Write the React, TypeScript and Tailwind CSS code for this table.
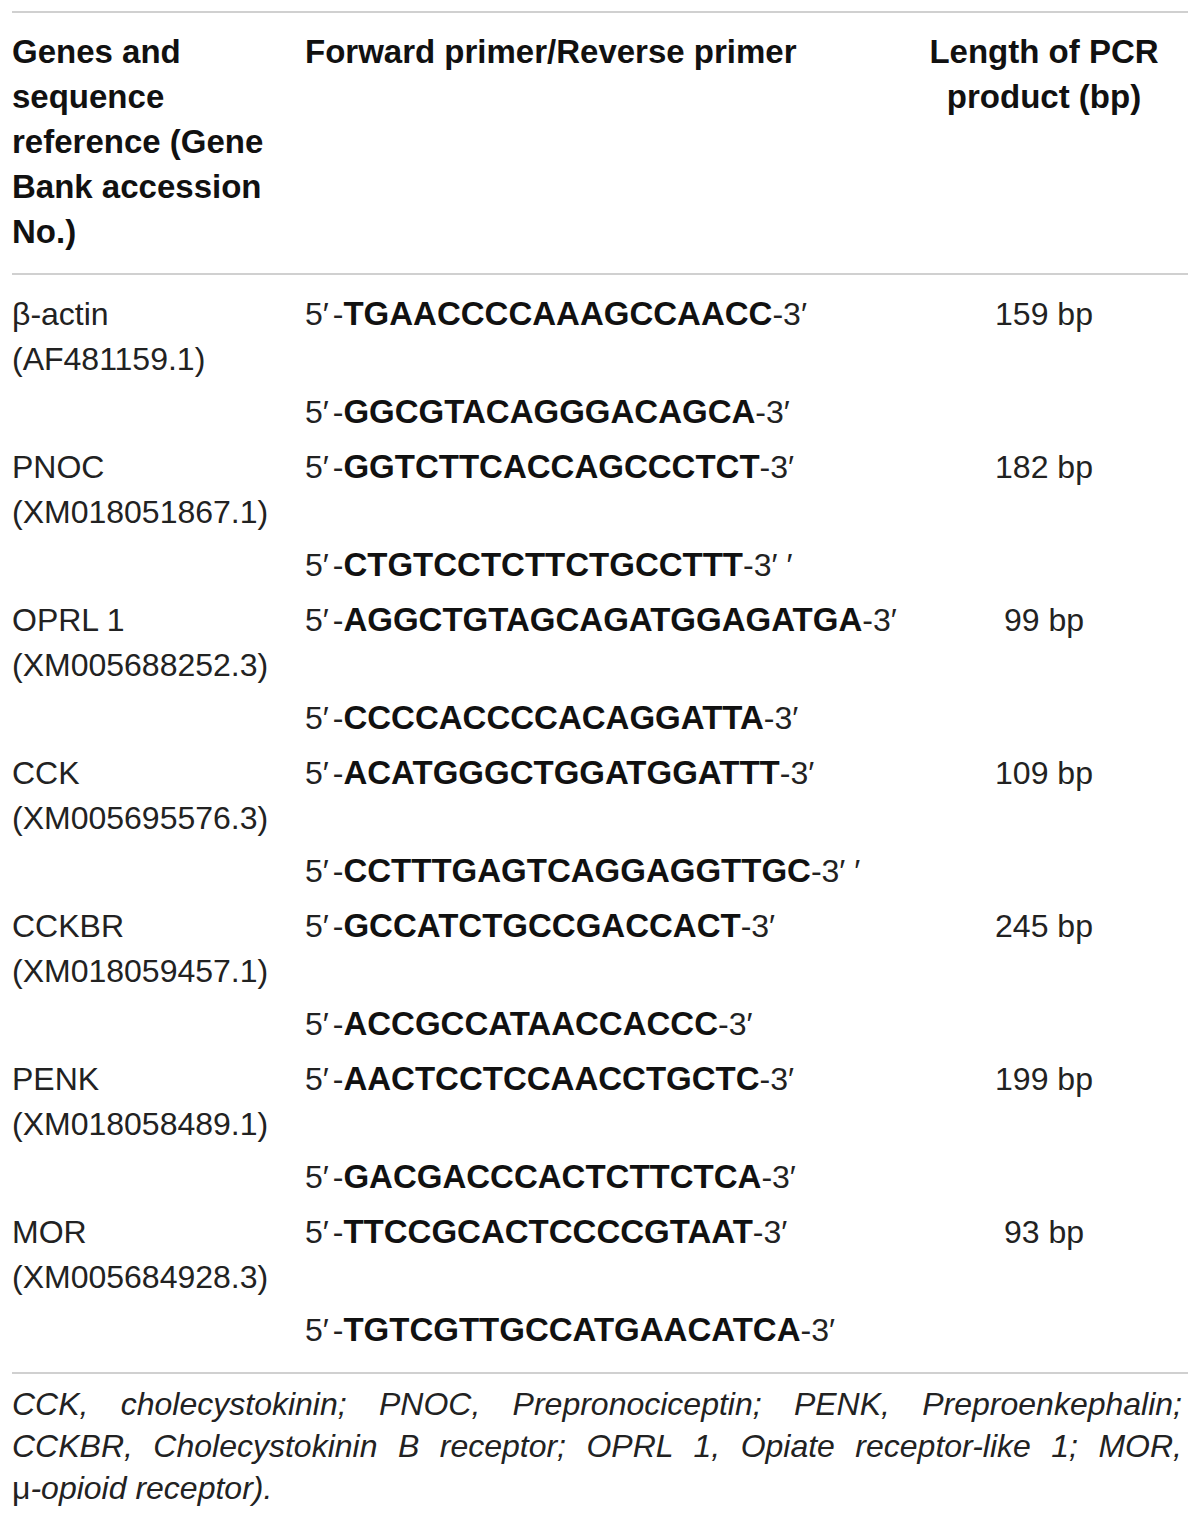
import React from "react";

const rows = [
  { name: "β-actin", acc: "(AF481159.1)", fwd: "TGAACCCCAAAGCCAACC", rev: "GGCGTACAGGGACAGCA", revExtra: "", len: "159 bp" },
  { name: "PNOC", acc: "(XM018051867.1)", fwd: "GGTCTTCACCAGCCCTCT", rev: "CTGTCCTCTTCTGCCTTT", revExtra: " ′", len: "182 bp" },
  { name: "OPRL 1", acc: "(XM005688252.3)", fwd: "AGGCTGTAGCAGATGGAGATGA", rev: "CCCCACCCCACAGGATTA", revExtra: "", len: "99 bp" },
  { name: "CCK", acc: "(XM005695576.3)", fwd: "ACATGGGCTGGATGGATTT", rev: "CCTTTGAGTCAGGAGGTTGC", revExtra: " ′", len: "109 bp" },
  { name: "CCKBR", acc: "(XM018059457.1)", fwd: "GCCATCTGCCGACCACT", rev: "ACCGCCATAACCACCC", revExtra: "", len: "245 bp" },
  { name: "PENK", acc: "(XM018058489.1)", fwd: "AACTCCTCCAACCTGCTC", rev: "GACGACCCACTCTTCTCA", revExtra: "", len: "199 bp" },
  { name: "MOR", acc: "(XM005684928.3)", fwd: "TTCCGCACTCCCCGTAAT", rev: "TGTCGTTGCCATGAACATCA", revExtra: "", len: "93 bp" },
];

function Primer({ seq, extra }: { seq: string; extra?: string }) {
  return (
    <span className="whitespace-nowrap">
      5′<span className="ml-[4px]">-</span>
      <span className="font-bold text-[33px] leading-none text-[#111]">{seq}</span>-3′{extra}
    </span>
  );
}

export default function App() {
  return (
    <div className="w-[1200px] h-[1521px] bg-white font-['Liberation_Sans',Arial,sans-serif] text-[32px] leading-[45px] text-[#222]">
      <div className="px-[12px]">
        <div className="mt-[11px] h-[2px] bg-[#d0d0d0]" />
        <div className="grid grid-cols-[293px_595px_288px] pt-[16px] pb-[19px] font-bold text-[33px] text-[#111]">
          <div className="pr-[20px]">Genes and sequence reference (Gene Bank accession No.)</div>
          <div>Forward primer/Reverse primer</div>
          <div className="text-center">Length of PCR product (bp)</div>
        </div>
        <div className="h-[2px] bg-[#d0d0d0]" />
        <div className="pt-[13px]">
          {rows.map((r) => (
            <div key={r.name}>
              <div className="grid grid-cols-[293px_595px_288px] pt-[4px] pb-[4px]">
                <div>
                  <div>{r.name}</div>
                  <div>{r.acc}</div>
                </div>
                <div>
                  <Primer seq={r.fwd} />
                </div>
                <div className="text-center">{r.len}</div>
              </div>
              <div className="grid grid-cols-[293px_595px_288px] pt-[4px] pb-[6px]">
                <div />
                <div>
                  <Primer seq={r.rev} extra={r.revExtra} />
                </div>
                <div />
              </div>
            </div>
          ))}
        </div>
        <div className="mt-[13px] h-[2px] bg-[#d0d0d0]" />
        <div className="pt-[9px] pr-[6px] leading-[42px] italic">
          <div className="text-justify [text-align-last:justify] whitespace-nowrap">
            CCK, cholecystokinin; PNOC, Prepronociceptin; PENK, Preproenkephalin;
          </div>
          <div className="text-justify [text-align-last:justify] whitespace-nowrap">
            CCKBR, Cholecystokinin B receptor; OPRL 1, Opiate receptor-like 1; MOR,
          </div>
          <div>
            <span className="not-italic">μ</span>-opioid receptor).
          </div>
        </div>
      </div>
    </div>
  );
}
